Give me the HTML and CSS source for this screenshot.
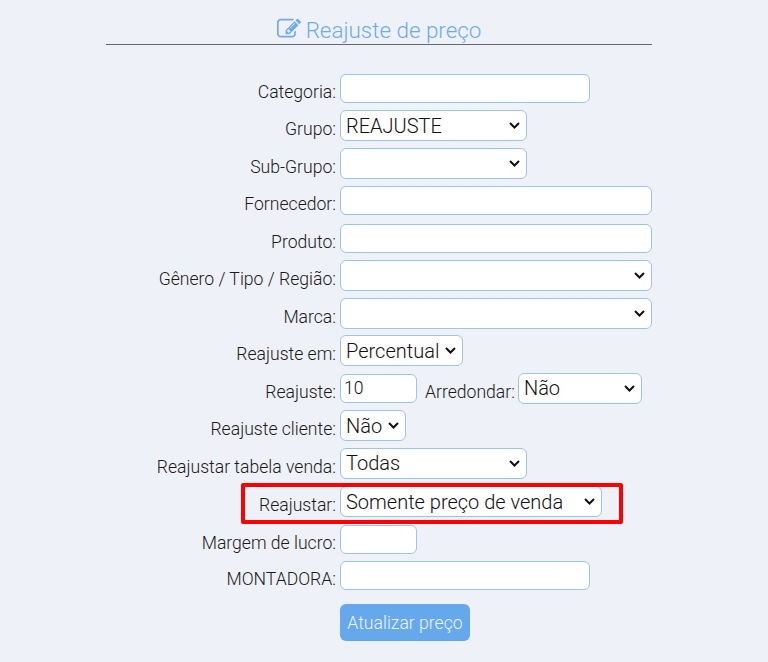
FILE: index.html
```html
<!DOCTYPE html>
<html lang="en">
<head>
    <meta charset="UTF-8">
    <title>Reajuste de preço</title>
    <link rel="stylesheet" href="styles.css">
</head>
<body>
    <div class="page">
        <h2 class="title">
            <svg class="title-icon" viewBox="0 0 1792 1792"><path fill="currentColor" d="M888 1184l116-116-152-152-116 116v56h96v96h56zm440-720q-16-16-33 1l-350 350q-17 17-1 33t33-1l350-350q17-17 1-33zm80 594v190q0 119-84.500 203.500t-203.500 84.500h-832q-119 0-203.500-84.500t-84.500-203.500v-832q0-119 84.500-203.500t203.500-84.500h832q63 0 117 25 15 7 18 23 3 17-9 29l-49 49q-14 14-32 8-23-6-45-6h-832q-66 0-113 47t-47 113v832q0 66 47 113t113 47h832q66 0 113-47t47-113v-126q0-13 9-22l64-64q15-15 35-7t20 29zm-96-738l288 288-672 672h-288v-288zm444 132l-92 92-288-288 92-92q28-28 68-28t68 28l152 152q28 28 28 68t-28 68z"/></svg>
            Reajuste de preço
        </h2>

        <form class="form">
            <div class="row">
                <label>Categoria:</label>
                <input type="text" class="w-md">
            </div>
            <div class="row">
                <label>Grupo:</label>
                <select class="w-sm"><option>REAJUSTE</option></select>
            </div>
            <div class="row">
                <label>Sub-Grupo:</label>
                <select class="w-sm"><option></option></select>
            </div>
            <div class="row">
                <label>Fornecedor:</label>
                <input type="text" class="w-lg">
            </div>
            <div class="row">
                <label>Produto:</label>
                <input type="text" class="w-lg">
            </div>
            <div class="row">
                <label>Gênero / Tipo / Região:</label>
                <select class="w-lg"><option></option></select>
            </div>
            <div class="row">
                <label>Marca:</label>
                <select class="w-lg"><option></option></select>
            </div>
            <div class="row">
                <label>Reajuste em:</label>
                <select class="w-percent"><option>Percentual</option></select>
            </div>
            <div class="row">
                <label>Reajuste:</label>
                <input type="text" class="w-xs" value="10">
                <span class="inline-label">Arredondar:</span>
                <select class="w-round"><option>Não</option></select>
            </div>
            <div class="row">
                <label>Reajuste cliente:</label>
                <select class="w-no"><option>Não</option></select>
            </div>
            <div class="row">
                <label>Reajustar tabela venda:</label>
                <select class="w-sm"><option>Todas</option></select>
            </div>
            <div class="row row-down">
                <label>Reajustar:</label>
                <select class="w-price"><option>Somente preço de venda</option></select>
                <div class="highlight"></div>
            </div>
            <div class="row">
                <label>Margem de lucro:</label>
                <input type="text" class="w-xs">
            </div>
            <div class="row row-up">
                <label>MONTADORA:</label>
                <input type="text" class="w-md">
            </div>
            <div class="actions">
                <button type="button" class="btn">Atualizar preço</button>
            </div>
        </form>
    </div>
</body>
</html>
```

FILE: styles.css
```css
body {
    margin: 0;
    background-color: #eef1f7;
    font-family: Roboto, "Liberation Sans", sans-serif;
    color: #1a1a1a;
}
.page {
    width: 546px;
    margin-left: 106px;
    padding-top: 16px;
}
.title {
    margin: 0;
    height: 28px;
    line-height: 28px;
    border-bottom: 1px solid #666;
    text-align: center;
    font-size: 22.4px;
    font-weight: 300;
    color: #6fabee;
    display: flex;
    justify-content: center;
    gap: 5px;
}
.title-icon {
    width: 24px;
    height: 24px;
    margin-top: 1px;
}
.form {
    padding-top: 24.5px;
}
.row {
    position: relative;
    display: flex;
    align-items: center;
    height: 37.5px;
}
.row-down {
    margin-top: 1px;
}
.row-up {
    margin-top: -1px;
}
.row label {
    width: 230px;
    margin-right: 4px;
    padding-top: 6.5px;
    text-align: right;
    font-size: 17.6px;
    font-weight: 300;
}
.inline-label {
    margin: 0 3px 0 8px;
    padding-top: 6.5px;
    font-size: 17.6px;
    font-weight: 300;
}
input, select {
    box-sizing: border-box;
    background-color: #fff;
    border: 1px solid #9cc3e8;
    border-radius: 6px;
    font-family: Roboto, "Liberation Sans", sans-serif;
    font-weight: 300;
    color: #111;
}
input {
    height: 29px;
    padding: 0 3px;
    font-size: 17.6px;
}
select {
    appearance: none;
    height: 31px;
    padding: 0 20px 0 5px;
    font-size: 20px;
    background-image: url("data:image/svg+xml,%3Csvg xmlns='http://www.w3.org/2000/svg' viewBox='0 0 11 7'%3E%3Cpath d='M1 1l4.500 4.500L10 1' fill='none' stroke='%23111' stroke-width='2'/%3E%3C/svg%3E");
    background-repeat: no-repeat;
    background-position: right 6px center;
    background-size: 11px 7px;
}
.w-xs { width: 77px; }
.w-sm { width: 187px; }
.w-md { width: 250px; }
.w-lg { width: 312px; }
.w-percent { width: 123px; }
.w-round { width: 124px; }
.w-no { width: 66px; }
.w-price { width: 262px; }
.highlight {
    position: absolute;
    left: 135px;
    top: 0;
    width: 382px;
    height: 41px;
    box-sizing: border-box;
    border: 4px solid #f00;
    border-radius: 2px;
}
.actions {
    margin-top: 9.500px;
    padding-left: 234px;
}
.btn {
    height: 37px;
    width: 130px;
    padding: 0;
    background-color: #65a9ec;
    color: #eef4fc;
    border: none;
    border-radius: 6px;
    font-family: Roboto, "Liberation Sans", sans-serif;
    font-size: 17.6px;
    font-weight: 300;
}
```
